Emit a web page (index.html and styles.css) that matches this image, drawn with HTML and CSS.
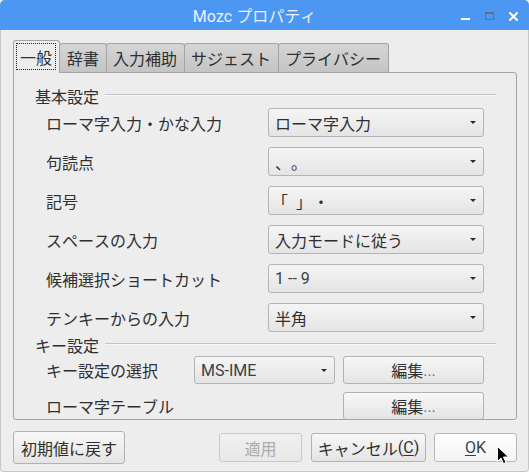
FILE: index.html
```html
<!DOCTYPE html>
<html lang="ja">
<head>
<meta charset="utf-8">
<title>Mozc プロパティ</title>
<link rel="stylesheet" href="styles.css">
</head>
<body>
<div class="window">
  <div class="titlebar">
    <div class="side"></div>
    <div class="title">Mozc プロパティ</div>
    <div class="side wm">
      <svg class="wm-icon" width="9" height="9" viewBox="0 0 9 9"><rect x="0" y="6" width="9" height="2" fill="#ffffff"/></svg>
      <svg class="wm-icon" width="9" height="9" viewBox="0 0 9 9"><rect x="0.5" y="0.5" width="8" height="7" fill="none" stroke="#6b6e73"/><rect x="0" y="0" width="9" height="2" fill="#6b6e73"/></svg>
      <svg class="wm-icon" width="9" height="9" viewBox="0 0 9 9"><path d="M1 1 L8 8 M8 1 L1 8" stroke="#ffffff" stroke-width="2" stroke-linecap="square"/></svg>
    </div>
  </div>
  <div class="client">
    <div class="tabs">
      <div class="tab active"><span class="focus">一般</span></div>
      <div class="tab wide">辞書</div>
      <div class="tab">入力補助</div>
      <div class="tab">サジェスト</div>
      <div class="tab">プライバシー</div>
    </div>
    <div class="panel">
      <div class="group-head"><span class="group-title">基本設定</span><span class="rule"></span></div>
      <div class="rows">
        <div class="label">ローマ字入力・かな入力</div>
        <div class="combo"><span class="value cjk">ローマ字入力</span><span class="arrow"></span></div>
        <div class="label">句読点</div>
        <div class="combo"><span class="value cjk">、。</span><span class="arrow"></span></div>
        <div class="label">記号</div>
        <div class="combo"><span class="value cjk brackets"><span class="open">「</span><span class="close">」</span>・</span><span class="arrow"></span></div>
        <div class="label">スペースの入力</div>
        <div class="combo"><span class="value">入力モードに従う</span><span class="arrow"></span></div>
        <div class="label">候補選択ショートカット</div>
        <div class="combo"><span class="value latin">1 -- 9</span><span class="arrow"></span></div>
        <div class="label">テンキーからの入力</div>
        <div class="combo"><span class="value">半角</span><span class="arrow"></span></div>
      </div>
      <div class="group-head key-head"><span class="group-title">キー設定</span><span class="rule"></span></div>
      <div class="keyrows">
        <div class="label">キー設定の選択</div>
        <div class="combo"><span class="value latin">MS-IME</span><span class="arrow"></span></div>
        <div class="button">編集<span class="dots">...</span></div>
        <div class="label">ローマ字テーブル</div>
        <div></div>
        <div class="button">編集<span class="dots">...</span></div>
      </div>
    </div>
    <div class="actions">
      <div class="button reset">初期値に戻す</div>
      <div class="right-buttons">
        <div class="button dlg disabled">適用</div>
        <div class="button dlg cancel">キャンセル<span class="latin">(<u>C</u>)</span></div>
        <div class="button dlg ok"><span class="latin"><u>O</u>K</span></div>
      </div>
    </div>
  </div>
  <svg class="cursor" width="13" height="19" viewBox="0 0 13 19"><path d="M0.5 0.5 L0.5 15.5 L4 12 L6.5 17.5 L9 16.5 L6.5 11 L11.5 11 Z" fill="#000000" stroke="#ffffff" stroke-width="1" stroke-linejoin="round"/></svg>
</div>
</body>
</html>
```
FILE: styles.css
```css
* { box-sizing: border-box; }
html, body { margin: 0; padding: 0; }
body {
  width: 529px;
  height: 472px;
  overflow: hidden;
  background: #ededed;
  font-family: Roboto, "Noto Sans CJK JP", "Noto Sans", sans-serif;
  font-size: 16px;
  color: #333333;
  text-spacing-trim: space-all;
  font-kerning: none;
}
.window {
  position: relative;
  width: 529px;
  height: 472px;
  display: flex;
  flex-direction: column;
  background: #ededed;
  border-radius: 5px 5px 4px 4px;
  overflow: hidden;
}
.titlebar {
  flex: none;
  height: 30px;
  background: #4c97f1;
  display: flex;
  align-items: center;
}
.side { flex: 1 1 0; }
.title {
  color: #eaf1fc;
  font-size: 16px;
  margin-right: 9px;
  white-space: nowrap;
}
.wm {
  display: flex;
  justify-content: flex-end;
  gap: 15px;
  padding-right: 11px;
  padding-top: 3px;
  height: 12px;
}
.wm-icon { display: block; }
.client {
  flex: 1;
  display: flex;
  flex-direction: column;
  border: 1px solid #c6c6c6;
  border-top: none;
  border-radius: 0 0 4px 4px;
  padding: 10px 11px 0 12px;
}
.tabs {
  display: flex;
  align-items: flex-end;
  height: 32px;
  position: relative;
  z-index: 1;
}
.tab {
  height: 29px;
  padding: 0 7px 0 6px;
  margin-right: -1px;
  border: 1px solid #a4a4a4;
  border-bottom: none;
  border-radius: 3px 3px 0 0;
  background: linear-gradient(#d5d5d5, #c4c4c4);
  display: flex;
  align-items: center;
  white-space: nowrap;
  color: #2f2f2f;
}
.tab.wide { padding-left: 7px; }
.tab.active {
  height: 33px;
  margin-bottom: -1px;
  background: #ededed;
  padding: 2px 3px 2px 2px;
  align-items: stretch;
}
.focus {
  display: flex;
  align-items: center;
  padding: 0 3px;
  border: 1px dotted #222;
  margin-bottom: 1px;
}
.panel {
  height: 348px;
  border: 1px solid #a4a4a4;
  border-radius: 0 3px 3px 3px;
  padding: 13px 20px 0 21px;
  overflow: hidden;
  display: flex;
  flex-direction: column;
}
.group-head {
  height: 20px;
  display: flex;
  align-items: center;
  gap: 6px;
}
.group-title { white-space: nowrap; color: #2f2f2f; }
.rule {
  flex: 1;
  height: 2px;
  margin-top: -3px;
  border-top: 1px solid #c4c4c4;
  border-bottom: 1px solid #f9f9f9;
}
.rows {
  margin-top: 2px;
  padding: 0 12px 0 11px;
  display: grid;
  grid-template-columns: 1fr 216px;
  grid-auto-rows: 29px;
  row-gap: 10px;
}
.label {
  display: flex;
  align-items: center;
  white-space: nowrap;
  color: #2f2f2f;
}
.combo {
  display: flex;
  align-items: center;
  padding: 0 7px 0 6px;
  border: 1px solid #b4b4b4;
  border-radius: 3px;
  background: linear-gradient(#f5f5f5, #e4e4e4);
  white-space: nowrap;
}
.value { flex: 1; color: #2f2f2f; }
.value.cjk { font-family: "Noto Sans CJK JP", sans-serif; }
.brackets { margin-left: -3px; }
.brackets .open { letter-spacing: 8px; }
.brackets .close { letter-spacing: 1px; }
.value.latin { color: #3a3f47; }
.arrow {
  width: 0;
  height: 0;
  border-left: 3px solid transparent;
  border-right: 3px solid transparent;
  border-top: 3px solid #2a2a2a;
}
.key-head { margin-top: 3px; }
.keyrows {
  margin-top: 1px;
  padding: 0 12px 0 11px;
  display: grid;
  grid-template-columns: 1fr 141px 141px;
  grid-auto-rows: 28px;
  column-gap: 8px;
  row-gap: 8px;
}
.button {
  display: flex;
  align-items: center;
  justify-content: center;
  border: 1px solid #b2b2b2;
  border-radius: 3px;
  background: linear-gradient(#f7f7f7, #e4e4e4);
  white-space: nowrap;
  color: #2f2f2f;
}
.dots { color: #777; }
.actions {
  margin-top: 11px;
  height: 33px;
  display: flex;
  align-items: center;
}
.reset { width: 112px; height: 33px; }
.right-buttons {
  margin-left: auto;
  display: flex;
  align-items: center;
}
.dlg { height: 29px; }
.disabled {
  width: 83px;
  color: #ababab;
  border-color: #c9c9c9;
  background: linear-gradient(#f0f0f0, #e8e8e8);
}
.cancel { width: 115px; margin-left: 9px; }
.ok {
  width: 83px;
  margin-left: 8px;
  background: linear-gradient(#fdfdfd, #f4f4f4);
  border-color: #b8b8b8;
  color: #34404f;
}
.latin { font-family: Roboto, "Noto Sans", sans-serif; }
u { text-decoration-thickness: 1px; text-underline-offset: 2px; }
.cursor {
  position: absolute;
  left: 497px;
  top: 446px;
}
```
